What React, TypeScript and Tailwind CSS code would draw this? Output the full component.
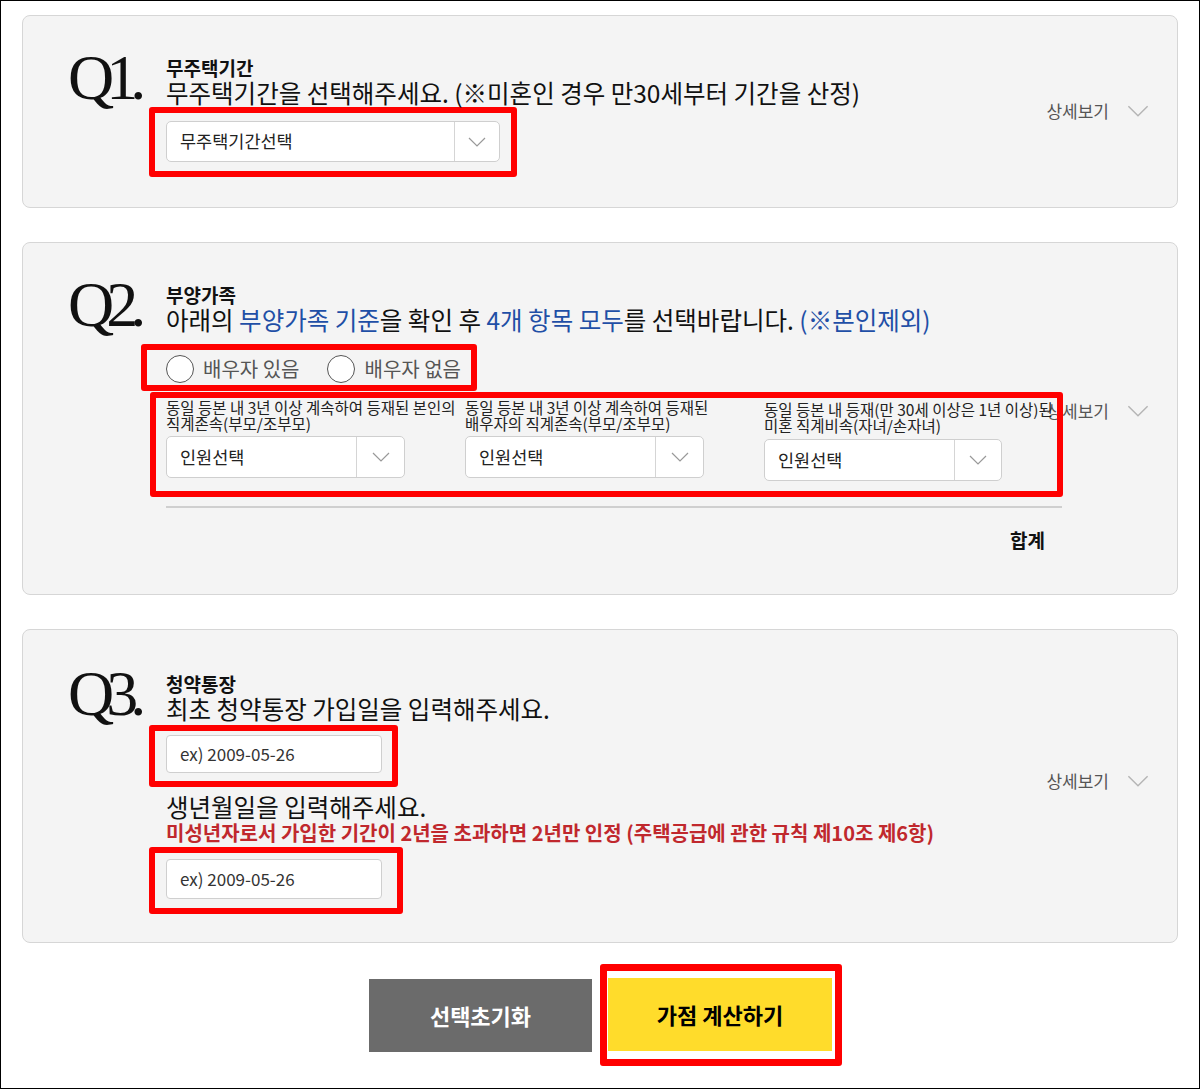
import React from 'react';

function Chevron({ w = 18, h = 10, color = '#999' }: { w?: number; h?: number; color?: string }) {
  return (
    <svg width={w} height={h} viewBox="0 0 18 10">
      <polyline points="1,1 9,9 17,1" fill="none" stroke={color} strokeWidth="1.2" />
    </svg>
  );
}

function Detail({ offset }: { offset: string }) {
  return (
    <div className={`absolute right-[28px] flex items-center gap-[18px] ${offset}`}>
      <span className="text-[17px] text-[#555]">상세보기</span>
      <Chevron w={22} h={12} color="#b5b5b5" />
    </div>
  );
}

function QLabel({ children }: { children: React.ReactNode }) {
  return (
    <div className="-mt-[11px] w-[98px] shrink-0 font-['Liberation_Serif',serif] text-[64px] leading-none tracking-[-8px] text-[#111]">
      {children}
    </div>
  );
}

function Select({ label, width, divider }: { label: string; width: string; divider: string }) {
  return (
    <div className={`flex items-center rounded-[5px] border border-[#cfcfcf] bg-white ${width}`}>
      <span className="flex-1 pl-[13px] text-[17.5px] text-[#222]">{label}</span>
      <div className={`flex h-full items-center justify-center border-l border-[#d5d5d5] ${divider}`}>
        <Chevron />
      </div>
    </div>
  );
}

function DateInput({ h }: { h: string }) {
  return (
    <div className={`flex w-[216px] items-center rounded-[4px] border border-[#cfcfcf] bg-white pl-[13px] text-[17px] text-[#333] ${h}`}>
      ex) 2009-05-26
    </div>
  );
}

function Radio({ label }: { label: string }) {
  return (
    <div className="flex items-center gap-[9px]">
      <div className="h-[28px] w-[28px] rounded-full border-[1.5px] border-[#555] bg-white" />
      <span className="text-[20px] leading-[28px] text-[#555]">{label}</span>
    </div>
  );
}

export default function App() {
  return (
    <div className="h-[1089px] w-[1200px] overflow-hidden border border-black bg-white px-[21px] pt-[14px] font-['Noto_Sans_CJK_KR',sans-serif] text-[#111]">
      {/* Q1 */}
      <div className="relative rounded-[8px] border border-[#d6d6d6] bg-[#f4f4f4] pb-[30px] pl-[45px] pt-[41px]">
        <div className="flex">
          <QLabel>Q1.</QLabel>
          <div className="w-[896px]">
            <p className="text-[19px] font-bold leading-[22px]">무주택기간</p>
            <p className="text-[24.5px] leading-[28px]">무주택기간을 선택해주세요. (※미혼인 경우 만30세부터 기간을 산정)</p>
            <div className="-ml-[17px] w-fit rounded-[3px] border-[6px] border-[#ff0000] px-[11px] pb-[9px] pt-[8px]">
              <Select label="무주택기간선택" width="h-[41px] w-[334px]" divider="w-[45px]" />
            </div>
          </div>
        </div>
        <Detail offset="top-[82px]" />
      </div>

      {/* Q2 */}
      <div className="relative mt-[34px] rounded-[8px] border border-[#d6d6d6] bg-[#f4f4f4] pb-[42px] pl-[45px] pt-[41px]">
        <div className="flex">
          <QLabel>Q2.</QLabel>
          <div className="w-[896px]">
            <p className="text-[19px] font-bold leading-[22px]">부양가족</p>
            <p className="text-[24.5px] leading-[28px]">
              아래의 <span className="text-[#1f4fa6]">부양가족 기준</span>을 확인 후{' '}
              <span className="text-[#1f4fa6]">4개 항목 모두</span>를 선택바랍니다.{' '}
              <span className="text-[#1f4fa6]">(※본인제외)</span>
            </p>
            <div className="-ml-[25px] mt-[10px] flex w-fit items-center gap-[28px] rounded-[3px] border-[6px] border-[#ff0000] pb-[2px] pl-[19px] pr-[10px] pt-[5px]">
              <Radio label="배우자 있음" />
              <Radio label="배우자 없음" />
            </div>
            <div className="relative z-10 -ml-[16px] mr-[-1px] mt-[1px] flex rounded-[3px] border-[6px] border-[#ff0000] pb-[10px] pl-[10px] pt-[1px]">
              <div className="w-[299px]">
                <p className="whitespace-nowrap text-[15.5px] leading-[16px] text-[#222]">
                  동일 등본 내 3년 이상 계속하여 등재된 본인의
                  <br />
                  직계존속(부모/조부모)
                </p>
                <div className="mt-[5px]">
                  <Select label="인원선택" width="h-[42px] w-[239px]" divider="w-[48px]" />
                </div>
              </div>
              <div className="w-[299px]">
                <p className="whitespace-nowrap text-[15.5px] leading-[16px] text-[#222]">
                  동일 등본 내 3년 이상 계속하여 등재된
                  <br />
                  배우자의 직계존속(부모/조부모)
                </p>
                <div className="mt-[5px]">
                  <Select label="인원선택" width="h-[42px] w-[239px]" divider="w-[48px]" />
                </div>
              </div>
              <div className="w-[280px]">
                <p className="whitespace-nowrap pt-[2px] text-[15.5px] leading-[16px] text-[#222]">
                  동일 등본 내 등재(만 30세 이상은 1년 이상)된
                  <br />
                  미혼 직계비속(자녀/손자녀)
                </p>
                <div className="mt-[6px]">
                  <Select label="인원선택" width="h-[42px] w-[238px]" divider="w-[47px]" />
                </div>
              </div>
            </div>
            <div className="mt-[9px] h-[2px] w-[896px] bg-[#cfcfcf]" />
            <p className="mt-[20px] pr-[17px] text-right text-[19px] font-bold leading-[24px]">합계</p>
          </div>
        </div>
        <Detail offset="top-[155px]" />
      </div>

      {/* Q3 */}
      <div className="relative mt-[34px] rounded-[8px] border border-[#d6d6d6] bg-[#f4f4f4] pb-[28px] pl-[45px] pt-[43px]">
        <div className="flex">
          <QLabel>Q3.</QLabel>
          <div className="w-[896px]">
            <p className="text-[19px] font-bold leading-[22px]">청약통장</p>
            <p className="text-[24.5px] leading-[28px]">최초 청약통장 가입일을 입력해주세요.</p>
            <div className="-ml-[17px] mt-[2px] w-fit rounded-[3px] border-[6px] border-[#ff0000] pb-[8px] pl-[11px] pr-[10px] pt-[4px]">
              <DateInput h="h-[38px]" />
            </div>
            <p className="mt-[6px] text-[24.5px] leading-[28px]">생년월일을 입력해주세요.</p>
            <p className="text-[20px] font-bold leading-[24px] text-[#c0282d]">
              미성년자로서 가입한 기간이 2년을 초과하면 2년만 인정 (주택공급에 관한 규칙 제10조 제6항)
            </p>
            <div className="-ml-[17px] mt-[2px] w-fit rounded-[3px] border-[6px] border-[#ff0000] pb-[9px] pl-[11px] pr-[15px] pt-[6px]">
              <DateInput h="h-[40px]" />
            </div>
          </div>
        </div>
        <Detail offset="top-[138px]" />
      </div>

      {/* buttons */}
      <div className="mt-[21px] flex items-center justify-center gap-[8px] pl-[11px]">
        <button className="h-[73px] w-[223px] bg-[#6b6b6b] text-[22px] font-bold text-white">선택초기화</button>
        <div className="rounded-[3px] border-[7px] border-[#ff0000] bg-white pb-[8px] pl-[1px] pr-[3px] pt-[7px]">
          <button className="h-[73px] w-[224px] bg-[#ffdc2b] text-[22px] font-bold text-black">가점 계산하기</button>
        </div>
      </div>
    </div>
  );
}
